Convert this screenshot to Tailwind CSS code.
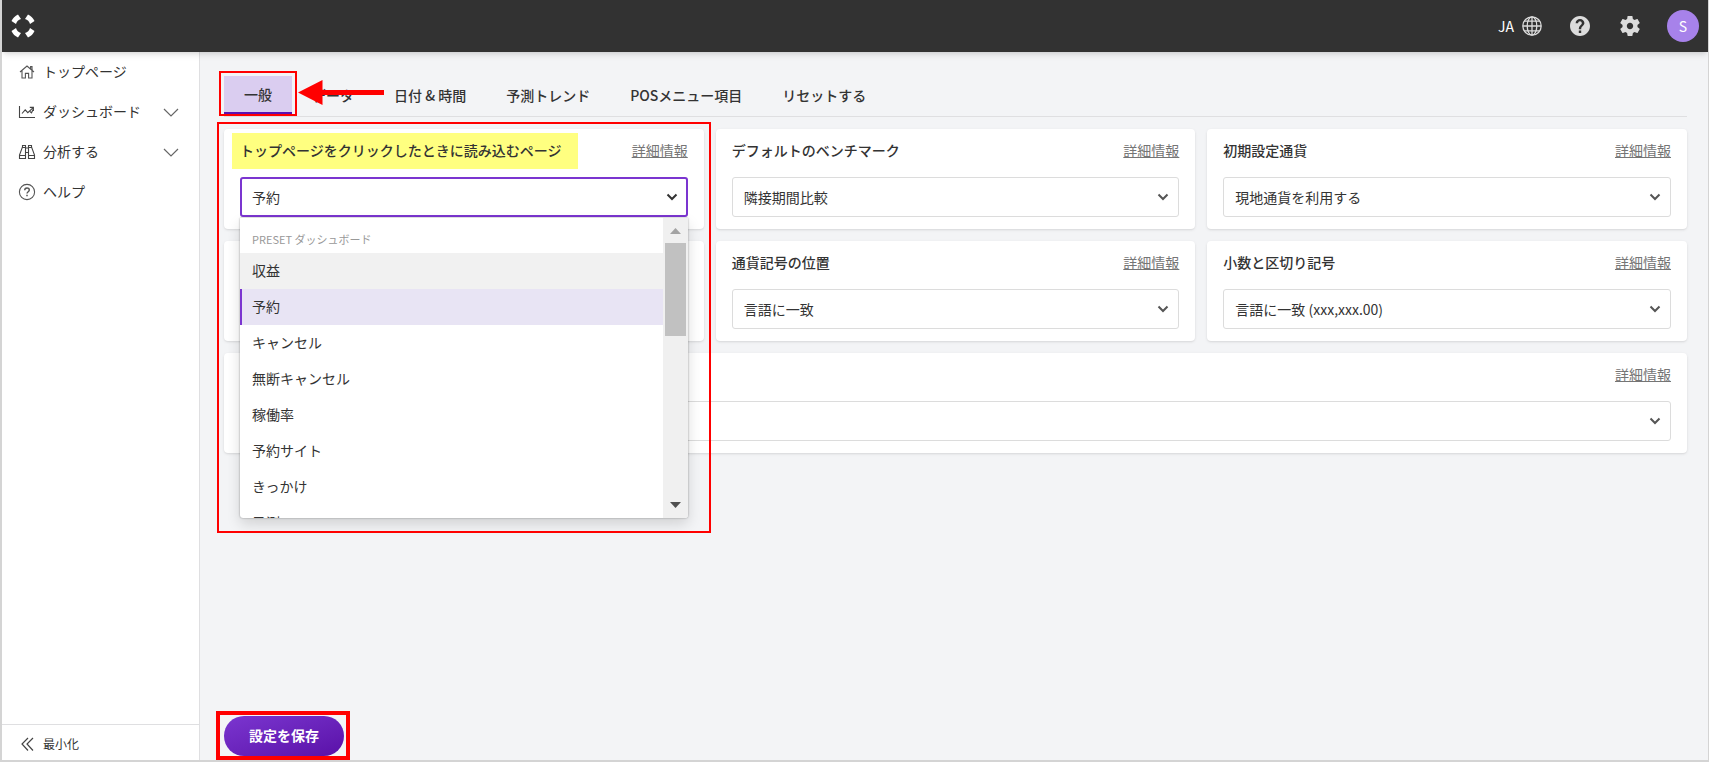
<!DOCTYPE html>
<html lang="ja">
<head>
    <meta charset="UTF-8">
    <meta name="viewport" content="width=device-width, initial-scale=1.0">
    <title>設定</title>
    <script src="https://cdn.jsdelivr.net/npm/@tailwindcss/browser@4"></script>
</head>
<body class="min-h-screen flex flex-col bg-[#f3f4f6] border-l-2 border-r border-b-2 border-[#d4d4d4] text-[#333] text-sm font-['Noto_Sans_CJK_JP',sans-serif]">

    <!-- ヘッダー -->
    <header class="relative z-10 h-[52px] shrink-0 bg-[#323232] flex items-center justify-between pl-2 pr-[9px] shadow-md">
        <a href="#" aria-label="トップ">
            <svg class="size-[26px]" viewBox="0 0 26 26" fill="#fff">
                <path d="M15 6l3-4.500q4.500 2 6.500 6.500L20 11A7.300 7.300 0 0 0 15 6z"/>
                <path d="M15 6l3-4.500q4.500 2 6.500 6.500L20 11A7.300 7.300 0 0 0 15 6z" transform="rotate(90 13 13)"/>
                <path d="M15 6l3-4.500q4.500 2 6.500 6.500L20 11A7.300 7.300 0 0 0 15 6z" transform="rotate(180 13 13)"/>
                <path d="M15 6l3-4.500q4.500 2 6.500 6.500L20 11A7.300 7.300 0 0 0 15 6z" transform="rotate(270 13 13)"/>
            </svg>
        </a>
        <div class="flex items-center text-[#dcdcdc]">
            <button class="flex items-center gap-2">
                <span class="text-white">JA</span>
                <svg class="size-5" viewBox="0 0 20 20" fill="none" stroke="currentColor" stroke-width="1.3">
                    <circle cx="10" cy="10" r="9.2"/>
                    <ellipse cx="10" cy="10" rx="4.8" ry="9.2"/>
                    <path d="M10 1v18M1 10h18M2.4 5.2h15.2M2.4 14.8h15.2"/>
                </svg>
            </button>
            <button class="ml-7" aria-label="ヘルプ">
                <svg class="size-5" viewBox="2 2 20 20" fill="currentColor">
                    <path d="M12 2C6.48 2 2 6.48 2 12s4.48 10 10 10 10-4.48 10-10S17.52 2 12 2zm1.2 17h-2.4v-2.4h2.4V19zm2-7.4-.9.9c-.7.75-1.1 1.3-1.1 2.7h-2.4v-.5c0-1.1.45-2.1 1.2-2.85l1.2-1.25c.4-.35.6-.85.6-1.4 0-1.1-.8-1.9-1.8-1.9s-1.9.8-1.9 1.9H7.6C7.6 6.8 9.6 5 12 5s4.4 1.8 4.4 4.1c0 1-.5 1.8-1.2 2.5z"/>
                </svg>
            </button>
            <button class="ml-[30px]" aria-label="設定">
                <svg class="size-5" viewBox="2 2 20 20" fill="currentColor">
                    <path d="M19.43 12.98c.04-.32.07-.64.07-.98s-.03-.66-.07-.98l2.11-1.65c.19-.15.24-.42.12-.64l-2-3.46c-.12-.22-.39-.3-.61-.22l-2.49 1c-.52-.4-1.08-.73-1.69-.98l-.38-2.65C14.46 2.18 14.25 2 14 2h-4c-.25 0-.46.18-.49.42l-.38 2.65c-.61.25-1.17.59-1.69.98l-2.49-1c-.23-.09-.49 0-.61.22l-2 3.46c-.13.22-.07.49.12.64l2.11 1.65c-.04.32-.07.65-.07.98s.03.66.07.98l-2.11 1.65c-.19.15-.24.42-.12.64l2 3.46c.12.22.39.3.61.22l2.49-1c.52.4 1.08.73 1.69.98l.38 2.65c.03.24.24.42.49.42h4c.25 0 .46-.18.49-.42l.38-2.65c.61-.25 1.17-.59 1.69-.98l2.49 1c.23.09.49 0 .61-.22l2-3.46c.12-.22.07-.49-.12-.64l-2.11-1.65zM12 15.2c-1.77 0-3.2-1.43-3.2-3.2s1.43-3.2 3.2-3.2 3.2 1.43 3.2 3.2-1.43 3.2-3.2 3.2z"/>
                </svg>
            </button>
            <button class="ml-[27px] size-8 rounded-full bg-[#a782ea] text-white">S</button>
        </div>
    </header>

    <div class="flex flex-1">

        <!-- サイドバー -->
        <nav class="w-[198px] shrink-0 bg-white border-r border-[#dfdfe1] flex flex-col">
            <a href="#" class="h-10 flex items-center gap-[7px] px-4">
                <svg class="size-[18px]" viewBox="0 0 18 18" fill="none" stroke="#555" stroke-width="1.1">
                    <path d="M2 9 9 3l7 6M4 7.8V15h3.4v-4.6h3.2V15H14V7.8M12.6 5.8V3.6H14v3.6"/>
                </svg>
                <span class="pb-[2px]">トップページ</span>
            </a>
            <a href="#" class="h-10 flex items-center gap-[7px] px-4">
                <svg class="size-[18px]" viewBox="0 0 18 18" fill="none" stroke="#444" stroke-width="1.1">
                    <path d="M1.5 3v11.5H17M4 10.5l3.2-3.6 2.6 2.8 5.4-5M11.8 4.4h3.6V8M12 8.5l1.5 1.3 2-4"/>
                </svg>
                <span class="pb-[2px]">ダッシュボード</span>
                <svg class="ml-auto w-[18px] h-3 mr-[3px]" viewBox="0 0 18 12" fill="none" stroke="#666" stroke-width="1.2"><path d="m2 3 7 7 7-7"/></svg>
            </a>
            <a href="#" class="h-10 flex items-center gap-[7px] px-4">
                <svg class="size-[18px]" viewBox="0 0 18 18" fill="none" stroke="#444" stroke-width="1.1">
                    <path d="M4.500 2.500h3v13h-6v-3.500l3-8zM13.500 2.500h-3v13h6v-3.500l-3-8zM7.500 5h3M7.500 9.500h3M1.500 12.500h6M10.500 12.500h6M4.500 4.500h3M10.500 4.500h3"/>
                </svg>
                <span class="pb-[2px]">分析する</span>
                <svg class="ml-auto w-[18px] h-3 mr-[3px]" viewBox="0 0 18 12" fill="none" stroke="#666" stroke-width="1.2"><path d="m2 3 7 7 7-7"/></svg>
            </a>
            <a href="#" class="h-10 flex items-center gap-[7px] px-4">
                <svg class="size-[18px]" viewBox="0 0 18 18" fill="none" stroke="#555" stroke-width="1.1">
                    <circle cx="9" cy="9" r="7.6"/>
                    <path d="M6.7 7.2c0-1.3 1-2.2 2.3-2.2s2.3.8 2.3 2c0 1.7-2.3 1.7-2.3 3.5" stroke-width="1.4"/>
                    <path d="M9 11.8v1.5" stroke-width="1.5"/>
                </svg>
                <span class="pb-[2px]">ヘルプ</span>
            </a>
            <button class="mt-auto h-9 pt-[2px] border-t border-[#dfdfe1] flex items-center gap-[7px] px-4 text-xs">
                <svg class="size-[18px]" viewBox="0 0 18 18" fill="none" stroke="#444" stroke-width="1.2"><path d="M10 3 4 9l6 6.500M15 3 9 9l6 6.500"/></svg>
                最小化
            </button>
        </nav>

        <!-- 設定 -->
        <main class="flex-1 flex flex-col pt-6 pl-6 pr-[21px] pb-1">
            <div class="relative flex border-b border-[#dfdfe1] pb-[2px] font-medium" role="tablist">
                <button role="tab" aria-selected="true" class="h-[38px] px-5 bg-[#dacdf0] border-b-2 border-[#5a12b0]">一般</button>
                <button role="tab" class="h-[38px] px-5">データ</button>
                <button role="tab" class="h-[38px] px-5">日付 &amp; 時間</button>
                <button role="tab" class="h-[38px] px-5">予測トレンド</button>
                <button role="tab" class="h-[38px] px-5">POSメニュー項目</button>
                <button role="tab" class="h-[38px] px-5">リセットする</button>
                <div class="absolute -left-[5px] -top-[5px] w-[78px] h-[45px] border-2 border-[#f00]"></div>
                <svg class="absolute left-[74px] top-1 w-[86px] h-[25px]" viewBox="0 0 86 25" fill="#f00"><path d="M0 12.500 24.500 0v10H86v5H24.500v10z"/></svg>
            </div>

            <div class="grid grid-cols-3 gap-3 mt-3">
                <section class="relative z-10 bg-white rounded px-4 py-3 shadow-sm">
                    <div class="flex justify-between leading-[18px]">
                        <label for="landing" class="-mx-2 -mt-2 -mb-[10px] pl-2 pr-[17px] pt-2 pb-[10px] bg-[#ffff80] font-medium">トップページをクリックしたときに読み込むページ</label>
                        <a href="#" class="text-[#757575] underline">詳細情報</a>
                    </div>
                    <div class="relative mt-[18px]">
                        <select id="landing" class="block w-full h-10 appearance-none rounded-[3px] border-2 border-[#7b35d0] bg-white px-[10px] pb-px outline-none">
                            <option>予約</option>
                        </select>
                        <svg class="absolute right-[10px] top-[14px] size-3 pointer-events-none" viewBox="0 0 12 12" fill="none" stroke="#333" stroke-width="2"><path d="m1.500 3.500 4.500 4.500 4.500-4.500"/></svg>

                        <!-- 開いた選択肢 -->
                        <div class="absolute left-0 right-0 top-[41px] h-[300px] flex overflow-hidden rounded-b-[3px] bg-white shadow-[0_0_2px_rgba(0,0,0,0.4),0_6px_14px_rgba(0,0,0,0.14)]">
                            <ul role="listbox" aria-label="ページ" class="flex-1">
                                <li role="presentation" class="h-[35px] pl-3 pt-3 text-[11px] leading-[18px] text-[#999]">PRESET ダッシュボード</li>
                                <li role="option" class="h-9 pl-3 leading-[34px] bg-[#f1f1f1]">収益</li>
                                <li role="option" aria-selected="true" class="h-9 pl-[10px] leading-[34px] bg-[#e8e4f4] border-l-2 border-[#7b35d0]">予約</li>
                                <li role="option" class="h-9 pl-3 leading-[34px]">キャンセル</li>
                                <li role="option" class="h-9 pl-3 leading-[34px]">無断キャンセル</li>
                                <li role="option" class="h-9 pl-3 leading-[34px]">稼働率</li>
                                <li role="option" class="h-9 pl-3 leading-[34px]">予約サイト</li>
                                <li role="option" class="h-9 pl-3 leading-[34px]">きっかけ</li>
                                <li role="option" class="h-9 pl-3 leading-[34px]">予測</li>
                            </ul>
                            <div class="w-[25px] bg-[#f0f0f0] flex flex-col items-center py-[10px]">
                                <svg class="w-[11px] h-[6px]" viewBox="0 0 11 6" fill="#a3a3a3"><path d="M0 6 5.500 0 11 6z"/></svg>
                                <div class="mt-[9px] w-[21px] h-[93px] bg-[#c1c1c1]"></div>
                                <svg class="mt-auto w-[11px] h-[6px]" viewBox="0 0 11 6" fill="#505050"><path d="M0 0h11L5.500 6z"/></svg>
                            </div>
                        </div>
                    </div>
                    <div class="absolute -left-[7px] -right-[7px] -top-[7px] h-[411px] border-2 border-[#f00] pointer-events-none"></div>
                </section>

                <section class="bg-white rounded px-4 py-3 shadow-sm">
                    <div class="flex justify-between leading-[18px]">
                        <label for="benchmark" class="font-medium">デフォルトのベンチマーク</label>
                        <a href="#" class="text-[#757575] underline">詳細情報</a>
                    </div>
                    <div class="relative mt-[18px]">
                        <select id="benchmark" class="block w-full h-10 appearance-none rounded-[3px] border border-[#dcdcdc] bg-white px-[11px] pb-px">
                            <option>隣接期間比較</option>
                        </select>
                        <svg class="absolute right-[10px] top-[14px] size-3 pointer-events-none" viewBox="0 0 12 12" fill="none" stroke="#555" stroke-width="2"><path d="m1.500 3.500 4.500 4.500 4.500-4.500"/></svg>
                    </div>
                </section>

                <section class="bg-white rounded px-4 py-3 shadow-sm">
                    <div class="flex justify-between leading-[18px]">
                        <label for="currency" class="font-medium">初期設定通貨</label>
                        <a href="#" class="text-[#757575] underline">詳細情報</a>
                    </div>
                    <div class="relative mt-[18px]">
                        <select id="currency" class="block w-full h-10 appearance-none rounded-[3px] border border-[#dcdcdc] bg-white px-[11px] pb-px">
                            <option>現地通貨を利用する</option>
                        </select>
                        <svg class="absolute right-[10px] top-[14px] size-3 pointer-events-none" viewBox="0 0 12 12" fill="none" stroke="#555" stroke-width="2"><path d="m1.500 3.500 4.500 4.500 4.500-4.500"/></svg>
                    </div>
                </section>

                <section class="bg-white rounded shadow-sm"></section>

                <section class="bg-white rounded px-4 py-3 shadow-sm">
                    <div class="flex justify-between leading-[18px]">
                        <label for="symbol" class="font-medium">通貨記号の位置</label>
                        <a href="#" class="text-[#757575] underline">詳細情報</a>
                    </div>
                    <div class="relative mt-[18px]">
                        <select id="symbol" class="block w-full h-10 appearance-none rounded-[3px] border border-[#dcdcdc] bg-white px-[11px] pb-px">
                            <option>言語に一致</option>
                        </select>
                        <svg class="absolute right-[10px] top-[14px] size-3 pointer-events-none" viewBox="0 0 12 12" fill="none" stroke="#555" stroke-width="2"><path d="m1.500 3.500 4.500 4.500 4.500-4.500"/></svg>
                    </div>
                </section>

                <section class="bg-white rounded px-4 py-3 shadow-sm">
                    <div class="flex justify-between leading-[18px]">
                        <label for="decimal" class="font-medium">小数と区切り記号</label>
                        <a href="#" class="text-[#757575] underline">詳細情報</a>
                    </div>
                    <div class="relative mt-[18px]">
                        <select id="decimal" class="block w-full h-10 appearance-none rounded-[3px] border border-[#dcdcdc] bg-white px-[11px] pb-px">
                            <option>言語に一致 (xxx,xxx.00)</option>
                        </select>
                        <svg class="absolute right-[10px] top-[14px] size-3 pointer-events-none" viewBox="0 0 12 12" fill="none" stroke="#555" stroke-width="2"><path d="m1.500 3.500 4.500 4.500 4.500-4.500"/></svg>
                    </div>
                </section>

                <section class="col-span-3 bg-white rounded px-4 py-3 shadow-sm">
                    <div class="flex justify-end leading-[18px]">
                        <a href="#" class="text-[#757575] underline">詳細情報</a>
                    </div>
                    <div class="relative mt-[18px]">
                        <select aria-label="表示" class="block w-full h-10 appearance-none rounded-[3px] border border-[#dcdcdc] bg-white px-[11px]"></select>
                        <svg class="absolute right-[10px] top-[14px] size-3 pointer-events-none" viewBox="0 0 12 12" fill="none" stroke="#555" stroke-width="2"><path d="m1.500 3.500 4.500 4.500 4.500-4.500"/></svg>
                    </div>
                </section>
            </div>

            <div class="relative mt-auto self-start">
                <button class="block w-[120px] h-10 pb-[2px] rounded-full bg-linear-to-br from-[#7b35d0] to-[#5a0fa8] text-white font-bold">設定を保存</button>
                <div class="absolute -left-2 -top-[5px] w-[134px] h-[49px] border-4 border-[#f00] pointer-events-none"></div>
            </div>
        </main>
    </div>
</body>
</html>
